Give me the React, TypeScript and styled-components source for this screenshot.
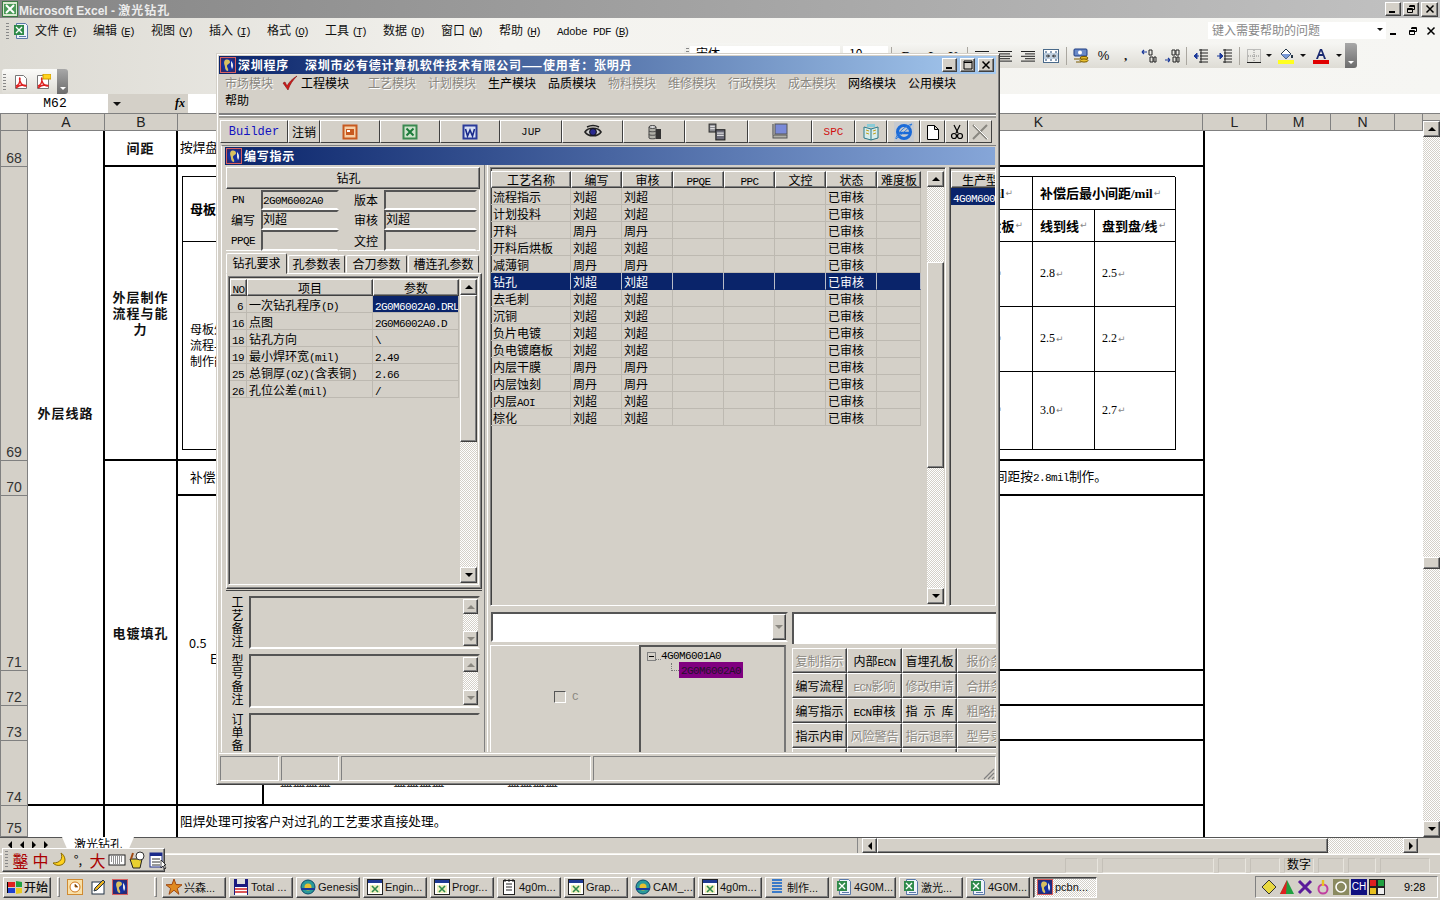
import React from 'react';
import styled, { createGlobalStyle, css } from 'styled-components';

const GRAY = '#d4d0c8';
const Global = createGlobalStyle`
  html, body { margin: 0; padding: 0; background: ${GRAY}; }
  body { font: 12px/14px "Noto Sans CJK SC", "Liberation Sans", sans-serif; color: #000; }
  * { box-sizing: border-box; }
`;

const raised = css`
  border: 1px solid; border-color: #fff #404040 #404040 #fff;
  box-shadow: inset -1px -1px 0 #808080;
  background: ${GRAY};
`;
const sunken = css`
  border: 1px solid; border-color: #808080 #fff #fff #808080;
  box-shadow: inset 1px 1px 0 #404040;
`;
const checker = css`
  background: repeating-conic-gradient(#fff 0 25%, ${GRAY} 0 50%) 0 0 / 2px 2px;
`;
const offText = css`color: #8a8780; text-shadow: 1px 1px 0 #fff;`;

const M = styled.span`font-family: "Liberation Mono", monospace; font-size: 11px; letter-spacing: -.6px; white-space: pre;`;
const Acc = styled(M)`letter-spacing: -2px;`;
const Mix = ({ t }: { t: string }) => (
  <>{t.split(/([\x20-\x7e]+)/).map((p, i) => (i % 2 ? <M key={i}>{p}</M> : p))}</>
);

const Page = styled.div`
  width: 1440px; height: 900px; position: relative; overflow: hidden;
  display: flex; flex-direction: column; background: ${GRAY};
`;

/* Icons */
const Ic = styled.svg<{ $s?: number }>`
  width: ${p => p.$s ?? 16}px; height: ${p => p.$s ?? 16}px; display: block; flex: none;
`;
type IP = { s?: number };
const XlBox = ({ s }: IP) => (
  <Ic $s={s} viewBox="0 0 16 16"><rect x=".5" y=".5" width="15" height="15" fill="#d8e8d0" stroke="#3c7a44" /><rect x="2" y="3" width="12" height="10" fill="#4a9a58" /><path d="M4 4l8 8M12 4l-8 8" stroke="#fff" strokeWidth="2" /></Ic>
);
const XlDoc = ({ s }: IP) => (
  <Ic $s={s} viewBox="0 0 16 16"><path d="M3.5.5h9l2 2v13h-11z" fill="#eef3fb" stroke="#5a78a8" /><rect x="1" y="2" width="10" height="10" fill="#2f8a4a" /><path d="M3 4l6 6M9 4l-6 6" stroke="#fff" strokeWidth="1.4" /><path d="M6 13.5h7" stroke="#5a78a8" /></Ic>
);
const XlTask = ({ s }: IP) => (
  <Ic $s={s} viewBox="0 0 16 16"><rect x=".5" y=".5" width="15" height="15" fill="#fff" stroke="#222" /><rect x="1" y="1" width="14" height="3" fill="#1f3a93" /><rect x="3" y="6" width="10" height="8" fill="#f0f0c0" /><path d="M5 7l6 6M11 7l-6 6" stroke="#2f8a4a" strokeWidth="1.6" /></Ic>
);
const Pdf = ({ note }: { note?: boolean }) => (
  <Ic viewBox="0 0 16 16"><path d="M2.5 1.5h8l3 3v10h-11z" fill="#fff" stroke="#777" /><path d="M3 12c3-1 4-4 4-7 0-2-1-1 0 2s3 5 6 5c1 0-1-1-3-1-2 0-5 1-7 3" fill="none" stroke="#d22" strokeWidth="1.4" />{note && <rect x="8" y="0" width="8" height="5" fill="#ffd21e" stroke="#c90" />}</Ic>
);
const Globe = ({ s }: IP) => (
  <Ic $s={s} viewBox="0 0 16 16"><rect x=".5" y=".5" width="15" height="15" fill="#2a2a70" stroke="#d86060" /><circle cx="8" cy="8" r="6.5" fill="#1430a0" /><path d="M5 3c3-1 5 0 5 2s-3 2-3 4 2 3 1 5c-2 0-3-2-3-4S3 6 5 3z" fill="#d8c060" /><path d="M11 4c2 2 3 5 1 8l-1-3z" fill="#e8e8e8" /></Ic>
);
const Win = () => (
  <Ic viewBox="0 0 16 16"><path d="M1 3h7v5H1z" fill="#e02020" /><path d="M9 2l6 1v5H9z" fill="#20a040" /><path d="M1 9h7v5H1z" fill="#2040d0" /><path d="M9 9h6v5l-6 1z" fill="#e8c820" /><path d="M0 3h1v11H0z" fill="#000" /></Ic>
);
const Lines = ({ a }: { a: 'c' | 'r' | 'l' }) => {
  const xs = [14, 10, 14, 10, 14];
  return (
    <Ic viewBox="0 0 16 16">
      {xs.map((w, i) => {
        const x = a === 'l' ? 1 : a === 'r' ? 15 - w : 8 - w / 2;
        return <rect key={i} x={x} y={3 + i * 2.4} width={w} height="1" fill="#222" />;
      })}
    </Ic>
  );
};
const Merge = () => (
  <Ic viewBox="0 0 16 16"><rect x=".5" y="1.5" width="15" height="13" fill="#fff" stroke="#4a6a8a" /><rect x="1" y="5" width="14" height="6" fill="#c0d0e0" /><path d="M3 8h3M13 8h-3M5 6.5L6.5 8 5 9.5M11 6.5L9.5 8l1.5 1.5" stroke="#222" fill="none" /><path d="M2 3h2v2H2zM7 3h2v2H7zM12 3h2v2h-2zM2 11h2v2H2zM7 11h2v2H7zM12 11h2v2h-2z" fill="#8aa0b8" /></Ic>
);
const Currency = () => (
  <Ic viewBox="0 0 16 16"><rect x="1" y="1" width="13" height="7" rx="1" fill="#6a8ac8" stroke="#1c3a80" /><circle cx="7" cy="4.5" r="2" fill="#fff" /><ellipse cx="11" cy="10" rx="4" ry="1.6" fill="#e8c030" stroke="#7a5a00" /><ellipse cx="11" cy="12.5" rx="4" ry="1.6" fill="#e8c030" stroke="#7a5a00" /><path d="M1 11h6M3 14h5" stroke="#7a5a00" /></Ic>
);
const Decimal = ({ dir }: { dir: 'inc' | 'dec' }) => (
  <Ic viewBox="0 0 16 16"><path d={dir === 'inc' ? 'M1 4h5M1 4l2-2M1 4l2 2' : 'M1 12h5M6 12l-2-2M6 12l-2 2'} stroke="#1c3a9a" fill="none" strokeWidth="1.2" /><path d="M8 2h3v5H8zM9 9h3v5H9zM13 9h2v5h-2z" fill="none" stroke="#222" />{dir === 'dec' && <path d="M12 2h3v5h-3z" fill="none" stroke="#222" />}</Ic>
);
const Indent = ({ out }: { out?: boolean }) => (
  <Ic viewBox="0 0 16 16"><path d="M6 2h9M7 5h8M7 8h8M7 11h8M6 14h9M8 1v14" stroke="#222" fill="none" /><path d={out ? 'M1 8h5M1 8l3-3v6z' : 'M0 8h4M6 8L3 5v6z'} fill="#1c3a9a" stroke="#1c3a9a" /></Ic>
);
const Borders = () => (
  <Ic viewBox="0 0 16 16"><path d="M1.5 1.5h13v13h-13zM8 2v12M2 8h12" fill="none" stroke="#888" strokeDasharray="1 1" /><path d="M1 14.5h14" stroke="#222" /></Ic>
);
const Fill = () => (
  <Ic viewBox="0 0 16 16"><path d="M8 1l5 5-5 5-5-5z" fill="#fff" stroke="#234" /><path d="M3 6h10l-5 5z" fill="#7a9ad8" /><path d="M14 7v3" stroke="#234" strokeWidth="2" /><rect y="12" width="16" height="4" fill="#ffff20" /></Ic>
);
const FontA = () => (
  <Ic viewBox="0 0 16 16"><path d="M3 11L7 1h2l4 10h-2l-1-3H6l-1 3zM6.7 6h2.6L8 3z" fill="#1a2a70" /><rect y="12" width="16" height="4" fill="#e00000" /></Ic>
);
const Grip = styled.span<{ $h?: number }>`
  width: 3px; height: ${p => p.$h ?? 16}px; flex: none; margin: 0 1px;
  background: repeating-linear-gradient(#888 0 1px, transparent 1px 3px);
`;
const Drop = styled.span`
  width: 0; height: 0; flex: none; border: 3px solid transparent; border-top: 3px solid #111; border-bottom: 0;
`;

/* Excel title */
const ExcelTitle = styled.div`
  height: 18px; flex: none; display: flex; align-items: center; padding: 0 2px;
  background: linear-gradient(90deg, #858585, #c2c2c2);
  color: #ececec; font: bold 12px "Liberation Sans", "Noto Sans CJK SC", sans-serif; gap: 1px;
`;
const TitleCjk = styled.span`letter-spacing: 1px;`;
const TitleSpacer = styled.div`flex: 1;`;
const CapBtn = styled.span<{ $s: number }>`
  ${raised}; width: ${p => p.$s}px; height: ${p => p.$s - 2}px; flex: none;
  display: flex; align-items: center; justify-content: center; color: #000;
  font: bold 10px/1 "Liberation Sans", sans-serif; margin-left: 1px;
`;
const CapIcon = ({ k, s = 10 }: { k: 'min' | 'max' | 'restore' | 'x'; s?: number }) => (
  <Ic $s={s} viewBox="0 0 10 10">
    {k === 'min' && <rect x="1" y="7" width="6" height="2" fill="#000" />}
    {k === 'max' && <path d="M1 1h8v8H1zM1 2.5h8" fill="none" stroke="#000" />}
    {k === 'restore' && <path d="M3.5 1.5h5v4h-2M1.5 4.5h5v4h-5zM3 2.5h5M1.5 5.5h5" fill="none" stroke="#000" />}
    {k === 'x' && <path d="M1.5 1.5l7 7M8.5 1.5l-7 7" stroke="#000" strokeWidth="1.5" />}
  </Ic>
);

/* Excel chrome */
const Chrome = styled.div`
  height: 76px; flex: none; display: flex; flex-direction: column;
  background: linear-gradient(90deg, #dcdad3, #f4f3ef 35%, #f6f6f3);
`;
const MenuRow = styled.div`
  height: 25px; flex: none; display: flex; align-items: center; padding-left: 5px;
`;
const MenuIcon = styled.div`width: 30px; flex: none; display: flex; align-items: center; gap: 3px;`;
const XMenu = styled.span`width: 58px; flex: none; white-space: nowrap; color: #111;`;
const XMenuU = styled.u`text-decoration: underline;`;
const AdobeAcc = styled(Acc)`margin-left: 3px;`;
const HelpBox = styled.div`
  margin-left: auto; width: 178px; height: 17px; background: #fff; color: #888; flex: none;
  display: flex; align-items: center; padding: 0 3px 2px 4px; justify-content: space-between;
`;
const HelpCtrl = styled.div`width: 54px; flex: none; display: flex; justify-content: space-between; align-items: center; padding: 0 4px 0 3px;`;
const FormatRow = styled.div`height: 26px; flex: none; display: flex;`;
const FormatBar = styled.div`
  margin-left: 684px; width: 673px; height: 25px; display: flex; align-items: center;
  background: linear-gradient(#f6f6f3, #dedcd5); border-radius: 3px;
`;
const Slot = styled.span<{ $w: number }>`
  width: ${p => p.$w}px; flex: none; display: flex; align-items: center; justify-content: center;
  font: bold 13px "Liberation Serif", serif; color: #111;
`;
const Pct = styled.span`font: 13px "Liberation Sans", sans-serif;`;
const SlotSep = styled.span`width: 6px; flex: none; height: 18px; display: flex; justify-content: center; &::after { content: ""; width: 1px; background: #aaa7a0; }`;
const FontBox = styled.span<{ $w: number }>`
  width: ${p => p.$w}px; height: 20px; flex: none; background: #fff; padding-left: 6px; line-height: 14px;
`;
const TbGrip = styled.span`
  width: 12px; height: 25px; margin-left: auto; flex: none; border-radius: 0 3px 3px 0;
  background: linear-gradient(#a8a8a8, #6c6c6c); display: flex; align-items: flex-end; justify-content: center; padding-bottom: 4px;
`;
const WhiteDrop = styled(Drop)`border-top-color: #fff;`;
const PdfRow = styled.div`height: 25px; flex: none; display: flex; padding-left: 2px;`;
const PdfBar = styled.div`
  width: 64px; display: flex; align-items: center; gap: 6px; border-radius: 3px 0 0 3px; position: relative;
  background: linear-gradient(#fbfbf9, #dedcd5);
`;
const PdfGrip = styled(TbGrip)`margin-left: auto; width: 11px;`;

/* Formula */
const FormulaRow = styled.div`height: 20px; flex: none; display: flex; background: #fff; border-bottom: 1px solid #808080;`;
const NameBox = styled.div`
  width: 106px; margin-left: 2px; background: #fff; text-align: center; font: 13px/20px "Liberation Mono", monospace;
`;
const NameCtrl = styled.div`
  width: 80px; background: ${GRAY}; display: flex; align-items: center; padding-left: 5px; justify-content: space-between; padding-right: 3px;
  font: italic bold 12px "Liberation Serif", serif;
`;
const NameDrop = styled.span`width: 0; height: 0; border: 4px solid transparent; border-top: 4px solid #111; border-bottom: 0;`;

/* Sheet */
const SheetArea = styled.div`height: 723px; flex: none; display: flex;`;
const SheetMain = styled.div`width: 1423px; flex: none; display: flex; flex-direction: column; border-left: 1px solid #808080;`;
const ColHead = styled.div`height: 17px; flex: none; display: flex; background: ${GRAY};`;
const ColCell = styled.div<{ $w: number }>`
  width: ${p => p.$w}px; flex: none; border-right: 1px solid #808080; border-bottom: 1px solid #808080;
  text-align: center; font: 14px/16px "Liberation Sans", sans-serif; color: #222;
`;
const SheetGrid = styled.div`
  flex: 1; display: grid; background: #fff;
  grid-template-columns: 27px 77px 73px 86px 941px 218px;
  grid-template-rows: 36px 294px 35px 175px 35px 35px 65px 31px;
`;
const RowNum = styled.div<{ $r: number }>`
  grid-column: 1; grid-row: ${p => p.$r}; background: ${GRAY};
  border-right: 1px solid #808080; border-bottom: 1px solid #808080;
  display: flex; align-items: flex-end; justify-content: center;
  font: 14px/16px "Liberation Sans", sans-serif; color: #333;
`;
const Cell = styled.div<{ $a: string; $bb?: number; $br?: number; $center?: boolean }>`
  grid-area: ${p => p.$a}; min-width: 0; overflow: hidden; font-size: 12.7px;
  border-bottom: ${p => p.$bb ?? 0}px solid #000; border-right: ${p => p.$br ?? 0}px solid #000;
  ${p => p.$center && css`display: flex; align-items: center; justify-content: center; text-align: center;`}
`;
const Strong = styled.b<{ $pb?: number }>`font-weight: 700; font-size: 13px; letter-spacing: 1px; line-height: 16px; padding: 0 6px ${p => p.$pb ?? 0}px; color: #111;`;
const PlainLine = styled.div`display: flex; height: 100%; align-items: center; padding: 0 0 2px 2px; white-space: nowrap;`;
const RightLine = styled(PlainLine)`padding-left: 12px; justify-content: space-between; padding-right: 96px;`;
const FillC1 = styled.div`padding: 139px 0 0 11px; line-height: 16px;`;
const ELine = styled.div`padding-left: 21px;`;
const PeekText = styled.div`padding: 32px 0 0 16px; white-space: nowrap; word-spacing: 60px;`;

const Nested = styled.div`
  margin: 9px 0 0 4px; width: 993px; display: grid;
  grid-template-columns: 748px 102px 62px 81px; grid-template-rows: 33px 32px 65px 65px 78px;
  border-top: 1px solid #000; border-left: 1px solid #000;
`;
const NCell = styled.div<{ $a: string; $al?: string; $pl?: number; $pr?: number }>`
  grid-area: ${p => p.$a}; border-right: 1px solid #000; border-bottom: 1px solid #000;
  display: flex; align-items: center; justify-content: ${p => p.$al ?? 'flex-start'};
  padding: 0 ${p => p.$pr ?? 0}px 1px ${p => p.$pl ?? 7}px;
  white-space: nowrap; font: 12px "Liberation Serif", "Noto Sans CJK SC", serif;
`;
const NBold = styled.b`font-weight: 700; font-size: 13px; font-family: "Liberation Serif", "Noto Sans CJK SC", serif;`;
const Ret = styled.span`color: #888; font: 9px "DejaVu Sans", sans-serif; margin-left: 1px;`;
const NLines = styled.div`line-height: 16px; white-space: pre; font-family: "Noto Sans CJK SC", sans-serif;`;

/* scrollbars */
const BarWrap = styled.div<{ $w: number }>`
  width: ${p => p.$w}px; flex: none; display: flex; flex-direction: column;
`;
const BarBtn = styled.div<{ $h: number }>`
  ${raised}; height: ${p => p.$h}px; flex: none; display: flex; align-items: center; justify-content: center;
`;
const Tri = styled.span<{ $dir: 'up' | 'down' | 'left' | 'right'; $off?: boolean }>`
  width: 0; height: 0; border: 4px solid transparent;
  ${p => {
    const c = p.$off ? '#8a8780' : '#000';
    if (p.$dir === 'up') return `border-bottom: 4px solid ${c}; border-top: 0;`;
    if (p.$dir === 'down') return `border-top: 4px solid ${c}; border-bottom: 0;`;
    if (p.$dir === 'left') return `border-right: 4px solid ${c}; border-left: 0;`;
    return `border-left: 4px solid ${c}; border-right: 0;`;
  }}
`;
const Track = styled.div<{ $h?: number }>`
  ${checker}; ${p => (p.$h !== undefined ? `flex: 0 0 ${p.$h}px;` : 'flex: 1;')}
`;
const Thumb = styled.div<{ $h: number }>`${raised}; flex: 0 0 ${p => p.$h}px;`;
const VBar = ({ w = 16, btn = 16, before, thumb, off }: { w?: number; btn?: number; before?: number; thumb?: number; off?: boolean }) => (
  <BarWrap $w={w}>
    <BarBtn $h={btn}><Tri $dir="up" $off={off} /></BarBtn>
    {thumb ? <><Track $h={before} /><Thumb $h={thumb} /><Track /></> : <Track />}
    <BarBtn $h={btn}><Tri $dir="down" $off={off} /></BarBtn>
  </BarWrap>
);
const MainV = styled.div`width: 17px; flex: none; display: flex; flex-direction: column; background: ${GRAY};`;
const Splitter = styled.div`height: 7px; flex: none; border-top: 2px solid ${GRAY}; border-bottom: 1px solid #808080;`;
const MainVFill = styled.div`flex: 1; display: flex; min-height: 0; & > * { width: 17px; }`;

/* Bottom Excel */
const TabRow = styled.div`height: 16px; flex: none; display: flex; align-items: flex-start; background: ${GRAY}; border-top: 1px solid #555; border-bottom: 1px solid #fff; box-sizing: content-box; margin-bottom: -2px;`;
const TabNav = styled.div`width: 56px; flex: none; display: flex; justify-content: space-around; padding: 3px 4px 0;`;
const SheetTab = styled.div`
  width: 72px; height: 14px; flex: none; background: #fff; overflow: hidden; text-align: center; line-height: 14px; margin-left: 6px;
  clip-path: polygon(0 0, 100% 0, calc(100% - 6px) 100%, 6px 100%); margin-top: -1px;
`;
const TabGap = styled.div`flex: 1;`;
const HBar = styled.div`width: 561px; height: 15px; flex: none; display: flex; border-left: 1px solid #888; padding-left: 4px;`;
const HBtn = styled.div`${raised}; width: 15px; flex: none; display: flex; align-items: center; justify-content: center;`;
const HThumb = styled.div`${raised}; width: 451px; flex: none;`;
const HTrack = styled.div`${checker}; flex: 1;`;
const TabEnd = styled.div`width: 22px; flex: none;`;
const StatusRow = styled.div`height: 20px; flex: none; display: flex; align-items: center; justify-content: flex-end; gap: 4px; padding-right: 10px; padding-top: 3px; border-top: 1px solid #f4f2ec;`;
const StatusPanel = styled.div<{ $w: number }>`
  width: ${p => p.$w}px; height: 15px; flex: none; border: 1px solid; border-color: #c4c0b8 #e8e5de #e8e5de #c4c0b8; text-align: center; line-height: 10px;
`;

const Ime = styled.div`
  position: absolute; left: 2px; top: 848px; width: 163px; height: 24px; ${raised};
  display: flex; align-items: center; gap: 2px; padding-left: 1px; color: #a00; font-size: 16px; z-index: 2;
`;
const ImeGlyph = styled.span<{ $w: number }>`width: ${p => p.$w}px; flex: none; display: flex; justify-content: center; align-items: center;`;
const ImeDark = styled(ImeGlyph)`color: #111; font-size: 13px;`;

const Taskbar = styled.div`height: 27px; flex: none; display: flex; align-items: center; border-top: 1px solid #fff; padding-left: 3px; background: ${GRAY};`;
const StartBtn = styled.div`
  ${raised}; width: 48px; height: 21px; flex: none; display: flex; align-items: center; padding-left: 3px; gap: 1px; font-weight: 500; color: #111;
`;
const TbHandle = styled.span<{ $ml: number; $mr: number }>`
  width: 3px; height: 20px; flex: none; margin: 0 ${p => p.$mr}px 0 ${p => p.$ml}px; border: 1px solid; border-color: #fff #808080 #808080 #fff;
`;
const Quick = styled.div`width: 69px; flex: none; display: flex; justify-content: space-between; padding: 0 4px;`;
const TaskBtn = styled.div<{ $on?: boolean }>`
  ${raised}; width: 64px; height: 21px; flex: none; margin-right: 3px; padding-left: 3px; display: flex; align-items: center; gap: 2px;
  white-space: nowrap; overflow: hidden; font: 11px "Liberation Sans", "Noto Sans CJK SC", sans-serif; color: #111;
  ${p => p.$on && css`
    border-color: #404040 #fff #fff #404040; box-shadow: inset 1px 1px 0 #808080;
    background: repeating-conic-gradient(#fff 0 25%, ${GRAY} 0 50%) 0 0 / 2px 2px;
  `}
`;
const Tray = styled.div`
  margin-left: auto; margin-right: 2px; width: 183px; height: 22px; flex: none; display: flex; align-items: center;
  border: 1px solid; border-color: #808080 #fff #fff #808080; padding-left: 4px;
`;
const TrayItem = styled.span`width: 18px; flex: none; display: flex; justify-content: center;`;
const Clock = styled.span`margin-left: 18px; font: 11px "Liberation Sans", sans-serif;`;
const Ch = styled.span`background: #101080; color: #fff; font: 10px/16px "Liberation Sans", sans-serif; width: 16px; height: 16px; text-align: center;`;

/* Dialog */
const Dialog = styled.div`
  position: absolute; left: 216px; top: 53px; width: 784px; height: 732px; z-index: 1;
  background: ${GRAY}; display: flex; flex-direction: column; padding: 2px 3px 1px 2px;
  border: 1px solid; border-color: ${GRAY} #404040 #404040 ${GRAY};
  box-shadow: inset 1px 1px 0 #fff, inset -1px -1px 0 #808080;
`;
const WinTitle = styled.div`
  height: 18px; flex: none; display: flex; align-items: center; padding: 0 2px 0 1px; color: #fff; font-weight: 700; white-space: nowrap;
  background: linear-gradient(90deg, #0a246a, #a6caf0); gap: 2px; letter-spacing: .75px;
`;
const TitleGap = styled.span`width: 12px;`;
const DlgCap = styled(CapBtn)`height: 14px;`;
const DMenuRow = styled.div`height: 18px; flex: none; display: flex; align-items: center; padding-left: 6px; white-space: nowrap;`;
const DMenu = styled.span<{ $w: number; $off?: boolean }>`
  width: ${p => p.$w}px; flex: none; display: flex; align-items: center; gap: 2px;
  ${p => p.$off && offText}
`;
const HelpMenuRow = styled(DMenuRow)`padding-bottom: 2px;`;
const Rule = styled.div`height: 5px; flex: none; margin-top: 3px; border-top: 2px solid #808080; border-bottom: 2px solid #9c9a94; box-shadow: inset 0 0 0 1px #fff;`;
const DToolbar = styled.div`height: 23px; flex: none; margin: 2px 0 0 1px; display: flex;`;
const DTool = styled.div<{ $w: number }>`
  width: ${p => p.$w}px; flex: none; border: 1px solid; border-color: #fff #404040 #404040 #fff;
  display: flex; align-items: center; justify-content: center; white-space: nowrap; overflow: hidden;
`;
const ToolMono = styled.span<{ $c?: string; $s?: number }>`font: ${p => p.$s ?? 11}px "Liberation Mono", monospace; color: ${p => p.$c ?? '#111'};`;
const Child = styled.div`
  flex: 1; min-height: 0; margin: 2px 0 0 2px; border-left: 1px solid #fff; border-top: 1px solid #808080; padding: 1px 0 0 3px; display: flex; flex-direction: column; overflow: hidden;
`;
const ChildTitle = styled(WinTitle)`margin-right: 1px; background: linear-gradient(90deg, #0a246a, #86a6d8);`;
const ChildBody = styled.div`flex: 1; min-height: 0; display: flex; overflow: hidden;`;
const LeftPane = styled.div`width: 257px; flex: none; padding: 2px 0 0 1px; display: flex; flex-direction: column; overflow: hidden;`;
const Head = styled.div`${raised}; height: 22px; flex: none; width: 254px; text-align: center; line-height: 20px; padding-right: 9px;`;
const FormGrid = styled.div`
  margin-top: 1px; flex: none; display: grid; grid-template-columns: 35px 78px 45px 93px; grid-template-rows: 20px 20px 21px; width: 254px; height: 61px;
  border: solid #fff; border-width: 0 1px 1px 0;
`;
const FLabel = styled.div<{ $pl: number }>`display: flex; align-items: center; padding-left: ${p => p.$pl}px; font-size: 12px;`;
const FInput = styled.div`
  border: 2px solid; border-color: #555 #d4d0c8 #fff #555; line-height: 14px; white-space: nowrap; overflow: hidden;
`;
const Tabs = styled.div`height: 21px; flex: none; margin-top: 1px; display: flex; align-items: flex-end; gap: 1px;`;
const PTab = styled.div<{ $w: number; $on?: boolean }>`
  width: ${p => p.$w}px; height: ${p => (p.$on ? 21 : 18)}px; flex: none; text-align: center; line-height: 16px;
  border: 1px solid; border-color: #fff #404040 transparent #fff; border-radius: 2px 2px 0 0;
  white-space: nowrap;
  ${p => p.$on && 'border-bottom-color: #d4d0c8; margin-bottom: -1px; position: relative; z-index: 1; line-height: 17px;'}
`;
const TabPanel = styled.div`
  height: 316px; flex: none; width: 256px; padding: 2px 2px 3px 1px; display: flex;
  border: 1px solid; border-color: #fff #404040 #404040 #fff; box-shadow: inset -1px -1px 0 #808080;
`;
const PanelFrame = styled.div`flex: 1; display: flex; ${sunken}; padding: 2px 1px 1px 1px; gap: 1px;`;
const GridArea = styled.div`flex: 1; min-width: 0;`;
const LGrid = styled.div`
  display: grid; grid-template-columns: 17px 126px 86px; grid-auto-rows: 17px; width: 229px;
`;
const GHead = styled.div`
  ${raised}; text-align: center; line-height: 15px; white-space: nowrap; overflow: hidden;
`;
const GCell = styled.div<{ $sel?: boolean; $r?: boolean; $navyRow?: boolean }>`
  border-right: 1px solid #bdb9b1; border-bottom: 1px solid #bdb9b1; padding: 0 2px; white-space: nowrap; overflow: hidden; line-height: 17px;
  ${p => p.$r && 'text-align: right; padding-right: 3px;'}
  ${p => p.$sel && css`background: #0a246a; color: #fff;`}
  ${p => p.$navyRow && css`border-bottom-color: #0a246a; border-right-color: #b8bcc8;`}
`;
const Remarks = styled.div`flex: 1; min-height: 0; margin-top: 1px; border-top: 1px solid #444; padding: 5px 0 0 4px; overflow: hidden; display: flex; flex-direction: column; gap: 5px;`;
const RemarkRow = styled.div<{ $h: number }>`height: ${p => p.$h}px; flex: none; display: flex; gap: 5px;`;
const VLabel = styled.div`width: 14px; flex: none; writing-mode: vertical-rl; text-orientation: upright; line-height: 14px; letter-spacing: 1px;`;
const RemarkBox = styled.div`
  width: 231px; flex: none; display: flex; justify-content: flex-end;
  border: 2px solid; border-color: #555 #d4d0c8 #fff #555; padding: 1px 0;
`;
const Split = styled.div`width: 4px; flex: none; border-left: 1px solid #808080; border-right: 1px solid #fff; margin-left: 2px;`;
const RightPane = styled.div`width: 509px; flex: none; padding-top: 2px; display: flex; flex-direction: column; overflow: hidden;`;
const TopRow = styled.div`height: 439px; flex: none; display: flex; gap: 3px; padding-left: 2px;`;
const GridFrame = styled.div`width: 456px; flex: none; ${sunken}; display: flex; padding: 3px 2px 1px 0; gap: 6px;`;
const RGrid = styled.div`
  width: 430px; flex: none; display: grid; grid-template-columns: 80px repeat(6, 51px) 44px; grid-auto-rows: 17px; align-content: start;
`;
const ListFrame = styled.div`width: 47px; flex: none; ${sunken}; padding: 3px 0 0 1px; display: flex; flex-direction: column; overflow: hidden;`;
const ListHead = styled(GHead)`height: 17px; flex: none; width: 70px;`;
const ListSel = styled.div`height: 17px; flex: none; background: #0a246a; color: #fff; white-space: nowrap; overflow: hidden; padding-left: 2px; line-height: 17px;`;
const ComboRow = styled.div`height: 32px; flex: none; margin-top: 6px; display: flex; padding-left: 3px; gap: 4px;`;
const Combo = styled.div`
  width: 297px; height: 30px; flex: none; background: #fff; border: 2px solid; border-color: #555 #d4d0c8 #fff #555; display: flex; justify-content: flex-end;
`;
const ComboBtn = styled.div`${raised}; width: 14px; flex: none; display: flex; align-items: center; justify-content: center;`;
const WhiteBox = styled.div`flex: 1; background: #fff; border: solid #555; border-width: 2px 0 0 2px;`;
const BottomRow = styled.div`flex: 1; min-height: 0; display: flex; overflow: hidden; margin-top: 1px;`;
const CheckPanel = styled.div`
  width: 149px; flex: none; margin-left: 2px; border-top: 1px solid #fff; border-left: 1px solid #fff; display: flex; align-items: center; justify-content: center; gap: 6px; padding: 0 0 4px 2px; color: #8a8780;
`;
const CheckBox = styled.span`width: 12px; height: 12px; border: 1px solid; border-color: #555 #fff #fff #555; flex: none;`;
const TreeBox = styled.div`
  width: 147px; flex: none; border: solid; border-width: 2px 0 0 2px; border-color: #555; padding: 2px 0 0 6px; border-right: 2px solid #777;
`;
const TreeRow = styled.div<{ $pl?: number }>`display: flex; align-items: center; height: 14px; padding-left: ${p => p.$pl ?? 0}px;`;
const TreeMinus = styled.span`width: 9px; height: 9px; flex: none; border: 1px solid #808080; display: flex; align-items: center; justify-content: center; &::after { content: ""; width: 5px; height: 1px; background: #000; }`;
const TreeDots = styled.span<{ $w: number }>`width: ${p => p.$w}px; flex: none; border-bottom: 1px dotted #777; height: 7px;`;
const TreeElbow = styled(TreeDots)`border-left: 1px dotted #777; height: 8px; margin-bottom: 6px;`;
const TreeSel = styled.span`background: #800080; color: #25102a; padding: 0 2px; line-height: 13px;`;
const BtnGrid = styled.div`
  flex: 1; margin-left: 6px; padding-top: 3px; display: grid; grid-template-columns: repeat(4, 55px); grid-auto-rows: 25px; overflow: hidden; min-width: 0;
`;
const CmdBtn = styled.div<{ $off?: boolean }>`
  ${raised}; text-align: center; line-height: 23px; white-space: nowrap; overflow: hidden;
  ${p => p.$off && offText}
`;
const DStatus = styled.div`height: 30px; flex: none; margin-top: 1px; display: flex; border-top: 1px solid #fff; padding: 2px 0 2px 1px; gap: 2px;`;
const DPanel = styled.div<{ $w?: number }>`
  ${p => (p.$w ? `width: ${p.$w}px; flex: none;` : 'flex: 1;')}
  border: 1px solid; border-color: #808080 #fff #fff #808080; display: flex; align-items: flex-end; justify-content: flex-end;
`;

const slots: [number, React.ReactNode][] = [
  [23, <Lines a="c" />], [23, <Lines a="r" />], [24, <Merge />],
];

const PROCESS = [
  ['流程指示', '刘超', '刘超'], ['计划投料', '刘超', '刘超'], ['开料', '周丹', '周丹'], ['开料后烘板', '刘超', '刘超'],
  ['减薄铜', '周丹', '周丹'], ['钻孔', '刘超', '刘超'], ['去毛刺', '刘超', '刘超'], ['沉铜', '刘超', '刘超'],
  ['负片电镀', '刘超', '刘超'], ['负电镀磨板', '刘超', '刘超'], ['内层干膜', '周丹', '周丹'], ['内层蚀刻', '周丹', '周丹'],
  ['内层AOI', '刘超', '刘超'], ['棕化', '刘超', '刘超'],
];
const PARAMS = [
  ['6', '一次钻孔程序(D)', '2G0M6002A0.DRL'], ['16', '点图', '2G0M6002A0.D'], ['18', '钻孔方向', '\\'],
  ['19', '最小焊环宽(mil)', '2.49'], ['25', '总铜厚(OZ)(含表铜)', '2.66'], ['26', '孔位公差(mil)', '/'],
];
const COMMANDS: [string, boolean][] = [
  ['复制指示', true], ['内部ECN', false], ['盲埋孔板', false], ['报价条', true],
  ['编写流程', false], ['ECN影响', true], ['修改申请', true], ['合拼条', true],
  ['编写指示', false], ['ECN审核', false], ['指 示 库', false], ['粗略拼', true],
  ['指示内审', false], ['风险警告', true], ['指示退率', true], ['型号录', true],
  ['', false], ['', false], ['', false], ['', false],
];
const XMENUS: [string, string][] = [['文件', 'F'], ['编辑', 'E'], ['视图', 'V'], ['插入', 'I'], ['格式', 'O'], ['工具', 'T'], ['数据', 'D'], ['窗口', 'W'], ['帮助', 'H']];

const Check = () => (
  <Ic $s={18} viewBox="0 0 18 18"><path d="M2 9l5 7c2-6 5-10 9-14-5 3-8 6-10 10L4 8z" fill="#d01818" stroke="#801010" strokeWidth=".6" /></Ic>
);
const IPpt = () => <Ic viewBox="0 0 16 16"><rect x="1.5" y="1.5" width="13" height="13" fill="#f6d0a8" stroke="#c85a20" strokeWidth="2" /><rect x="4" y="5" width="8" height="6" fill="#c85a20" /><rect x="5" y="6" width="3" height="2" fill="#fff" /></Ic>;
const IXl = () => <Ic viewBox="0 0 16 16"><rect x="1.5" y="1.5" width="13" height="13" fill="#cfe3cc" stroke="#3a8a50" strokeWidth="2" /><path d="M4.5 4.5l7 7M11.5 4.5l-7 7" stroke="#1a7a3a" strokeWidth="2" /></Ic>;
const IWd = () => <Ic viewBox="0 0 16 16"><rect x="1.5" y="1.5" width="13" height="13" fill="#d8e0f4" stroke="#2a3a9a" strokeWidth="2" /><path d="M3.5 5l2 7 2.5-6 2.5 6 2-7" fill="none" stroke="#1a2a8a" strokeWidth="1.6" /></Ic>;
const IEye = () => <Ic $s={18} viewBox="0 0 18 18"><path d="M1 9c3-5 13-5 16 0-3 5-13 5-16 0z" fill="#d0d0d0" stroke="#222" strokeWidth="1.6" /><circle cx="9" cy="9" r="3.4" fill="#2a2a90" stroke="#111" /><path d="M3 4c4-2 8-2 12 0" stroke="#222" strokeWidth="1.6" fill="none" /></Ic>;
const IDb = () => <Ic viewBox="0 0 16 16"><path d="M3 3v11c0 1 7 1 7 0V3z" fill="#b0b0a8" stroke="#444" /><ellipse cx="6.5" cy="3" rx="3.5" ry="1.5" fill="#ddd" stroke="#444" /><path d="M3 7c0 1 7 1 7 0M3 10.5c0 1 7 1 7 0" fill="none" stroke="#444" /><rect x="10" y="5" width="5" height="10" fill="#333" /></Ic>;
const IServers = () => <Ic $s={18} viewBox="0 0 16 16"><rect x="1" y="1" width="6" height="7" fill="#8a8a90" stroke="#333" /><rect x="7" y="6" width="8" height="9" fill="#6a6a78" stroke="#222" /><path d="M8 9h6M8 11h6M2 3h4M2 5h4" stroke="#ddd" /></Ic>;
const IPc = () => <Ic $s={18} viewBox="0 0 18 18"><rect x="4" y="1" width="12" height="10" fill="#7a8ad8" stroke="#555" /><rect x="2" y="12" width="14" height="3" fill="#b0b0a8" stroke="#555" /><path d="M2 1v11" stroke="#888" strokeWidth="2" /></Ic>;
const INotes = () => <Ic $s={18} viewBox="0 0 18 18"><path d="M2 4l7 2 7-2v11l-7 2-7-2z" fill="#d8ecea" stroke="#2a7a8a" /><path d="M9 6v11" stroke="#2a7a8a" /><path d="M4 7l3 1M4 10l3 1M11 8l3-1M11 11l3-1" stroke="#c0a020" /><rect x="5" y="1" width="8" height="3" fill="#88ccd8" /></Ic>;
const IIe = () => <Ic $s={20} viewBox="0 0 20 20"><rect x="0" y="0" width="20" height="20" fill="#b8c4d8" opacity=".5" /><circle cx="10" cy="10" r="6.5" fill="none" stroke="#1a6ad8" strokeWidth="3" /><path d="M3 11h14" stroke="#1a6ad8" strokeWidth="2.5" /><path d="M2 17C1 14 10 4 18 2c-3 4-8 8-16 15z" fill="none" stroke="#2a7ae0" /></Ic>;
const IDoc = () => <Ic viewBox="0 0 16 16"><path d="M2.5 1.5h7l4 4v10h-11zM9.5 1.5v4h4" fill="#fff" stroke="#000" /></Ic>;
const IScissors = () => <Ic viewBox="0 0 16 16"><path d="M5 1l4 8M11 1L7 9" stroke="#000" strokeWidth="1.2" /><circle cx="5" cy="12" r="2.5" fill="none" stroke="#000" strokeWidth="1.2" /><circle cx="11" cy="12" r="2.5" fill="none" stroke="#000" strokeWidth="1.2" /></Ic>;
const ICross = () => <Ic $s={18} viewBox="0 0 18 18"><path d="M2 2l14 14M16 2L2 16" stroke="#8a8780" strokeWidth="2" /><path d="M3 2l14 14" stroke="#fff" /></Ic>;
const IStar = () => <Ic viewBox="0 0 16 16"><path d="M8 0l2 5.5 6 .3-4.7 3.7 1.6 5.8L8 11.2 3 15.3l1.6-5.8L0 5.8l6-.3z" fill="#e08a20" stroke="#a04810" /></Ic>;
const IFloppy = () => <Ic viewBox="0 0 16 16"><rect x="1" y="0" width="14" height="16" fill="#1a1a80" /><rect x="4" y="0" width="8" height="5" fill="#ddd" /><rect x="2" y="8" width="12" height="8" fill="#fff" /><path d="M2 10h12M2 13h12" stroke="#d02020" strokeWidth="1.5" /></Ic>;
const IGen = () => <Ic viewBox="0 0 16 16"><circle cx="8" cy="8" r="7" fill="#2a9a9a" stroke="#0a4a6a" /><circle cx="8" cy="8" r="3.5" fill="#e8c030" /><path d="M1 10h14" stroke="#1a3a9a" strokeWidth="2" /></Ic>;
const INote = () => <Ic viewBox="0 0 16 16"><rect x="2.5" y="1.5" width="11" height="14" fill="#fff" stroke="#222" /><path d="M5 5h6M5 8h6M5 11h6M4 0v3M8 0v3M12 0v3" stroke="#222" /></Ic>;
const IWp = () => <Ic viewBox="0 0 16 16"><path d="M3 1h10M3 4h10M3 7h10M3 10h10M3 13h10" stroke="#3a7ac8" strokeWidth="2" /></Ic>;
const IClock = () => <Ic viewBox="0 0 16 16"><rect x=".5" y=".5" width="15" height="15" fill="#f8e0a8" stroke="#d08a30" /><circle cx="8" cy="8" r="5" fill="#fff" stroke="#d0781c" /><path d="M8 5v3h3" stroke="#d0781c" /></Ic>;
const IPad = () => <Ic viewBox="0 0 16 16"><rect x="2" y="3" width="12" height="12" fill="#fff" stroke="#234" /><path d="M5 9l8-8 2 2-8 8-3 1z" fill="#e8b020" stroke="#234" /></Ic>;
const IMoon = () => <Ic viewBox="0 0 16 16"><path d="M10 1c2 5 0 10-8 10 3 4 12 3 12-3 0-3-2-6-4-7z" fill="#ffd21e" stroke="#8a6a00" /></Ic>;
const IKey = () => <Ic $s={18} viewBox="0 0 18 18"><rect x="1" y="4" width="16" height="10" fill="#fff" stroke="#222" /><path d="M3 6h12M3 8h12M3 10h12M5 12h8" stroke="#222" strokeDasharray="1 1" /></Ic>;
const IPerson = () => <Ic $s={18} viewBox="0 0 18 18"><path d="M2 8h12l-2 9H5z" fill="#e8d030" stroke="#222" /><circle cx="12" cy="5" r="4" fill="#fff" stroke="#333" /><path d="M5 2l-2 6" stroke="#a04810" strokeWidth="2" /></Ic>;
const IImeDoc = () => <Ic $s={18} viewBox="0 0 18 18"><rect x="1" y="2" width="12" height="14" fill="#fff" stroke="#1a2a8a" /><rect x="1" y="2" width="12" height="3" fill="#1a2a8a" /><path d="M3 8h8M3 11h8M3 14h8" stroke="#333" /><path d="M12 9v8l2-2 2 3 1-1-2-3h2z" fill="#fff" stroke="#000" strokeWidth=".7" /></Ic>;
const TrayIcons = [
  <Ic viewBox="0 0 16 16"><path d="M8 1l7 7-7 7-7-7z" fill="#e8d840" stroke="#333" /></Ic>,
  <Ic viewBox="0 0 16 16"><path d="M8 1l7 14H1z" fill="#20a040" /><path d="M8 1l-7 14h6z" fill="#e02020" /></Ic>,
  <Ic viewBox="0 0 16 16"><path d="M2 2l12 12M14 2L2 14" stroke="#5a1a9a" strokeWidth="3" /></Ic>,
  <Ic viewBox="0 0 16 16"><circle cx="8" cy="10" r="4.5" fill="none" stroke="#c040a0" strokeWidth="2" /><path d="M8 1v6" stroke="#e8c020" strokeWidth="2.4" /></Ic>,
  <Ic viewBox="0 0 16 16"><rect width="16" height="16" fill="#8a8a60" /><circle cx="8" cy="8" r="5" fill="none" stroke="#fff" strokeWidth="1.6" /></Ic>,
  <Ch>CH</Ch>,
  <Ic viewBox="0 0 16 16"><rect width="16" height="16" fill="#222" /><rect x="1" y="1" width="6" height="6" fill="#e02020" /><rect x="9" y="1" width="6" height="6" fill="#20a040" /><rect x="1" y="9" width="6" height="6" fill="#e8c020" /><rect x="9" y="9" width="6" height="6" fill="#eee" /></Ic>,
];
const TASKS: [React.ReactNode, string, boolean?][] = [
  [<IStar />, '兴森...'], [<IFloppy />, 'Total ...'], [<IGen />, 'Genesis'], [<XlTask />, 'Engin...'], [<XlTask />, 'Progr...'], [<INote />, '4g0m...'],
  [<XlTask />, 'Grap...'], [<IGen />, 'CAM_...'], [<XlTask />, '4g0m...'], [<IWp />, '制作...'], [<XlDoc />, '4G0M...'], [<XlDoc />, '激光...'], [<XlDoc />, '4G0M...'], [<Globe />, 'pcbn...', true],
];
const TOOLS: [number, React.ReactNode][] = [
  [68, <ToolMono $c="#1212c0" $s={12}>Builder</ToolMono>], [32, '注销'], [60, <IPpt />], [60, <IXl />], [60, <IWd />],
  [62, <ToolMono>JUP</ToolMono>], [61, <IEye />], [62, <IDb />], [63, <IServers />], [64, <IPc />],
  [43, <ToolMono $c="#d01010">SPC</ToolMono>], [32, <INotes />], [33, <IIe />], [25, <IDoc />], [23, <IScissors />], [24, <ICross />],
];

export default function App() {
  return (
    <Page>
      <Global />
      <ExcelTitle>
        <XlBox />
        <span>Microsoft Excel - <TitleCjk>激光钻孔</TitleCjk></span>
        <TitleSpacer />
        <CapBtn $s={16}><CapIcon k="min" /></CapBtn>
        <CapBtn $s={16}><CapIcon k="restore" /></CapBtn>
        <CapBtn $s={17}><CapIcon k="x" /></CapBtn>
      </ExcelTitle>

      <Chrome>
        <MenuRow>
          <MenuIcon><Grip /><XlDoc /></MenuIcon>
          {XMENUS.map(([t, k]) => (
            <XMenu key={t}>{t} <Acc>(<XMenuU>{k}</XMenuU>)</Acc></XMenu>
          ))}
          <XMenu><M>Adobe PDF</M><AdobeAcc>(<XMenuU>B</XMenuU>)</AdobeAcc></XMenu>
          <HelpBox>键入需要帮助的问题<Drop /></HelpBox>
          <HelpCtrl>
            <CapIcon k="min" /><CapIcon k="restore" /><CapIcon k="x" />
          </HelpCtrl>
        </MenuRow>
        <FormatRow>
          <FormatBar>
            <Slot $w={6}><Grip /></Slot>
            <FontBox $w={150}>宋体</FontBox>
            <Slot $w={3} />
            <FontBox $w={45}>10</FontBox>
            <SlotSep />
            <Slot $w={24}>B</Slot><Slot $w={24}><i>I</i></Slot><Slot $w={22}><u>U</u></Slot>
            <SlotSep />
            <Slot $w={23}><Lines a="l" /></Slot>
            {slots.map(([w, n], i) => <Slot key={i} $w={w}>{n}</Slot>)}
            <SlotSep />
            <Slot $w={24}><Currency /></Slot>
            <Slot $w={21}><Pct>%</Pct></Slot>
            <Slot $w={23}>,</Slot>
            <Slot $w={23}><Decimal dir="inc" /></Slot>
            <Slot $w={23}><Decimal dir="dec" /></Slot>
            <SlotSep />
            <Slot $w={24}><Indent out /></Slot>
            <Slot $w={23}><Indent /></Slot>
            <SlotSep />
            <Slot $w={23}><Borders /></Slot>
            <Slot $w={8}><Drop /></Slot>
            <Slot $w={26}><Fill /></Slot>
            <Slot $w={8}><Drop /></Slot>
            <Slot $w={28}><FontA /></Slot>
            <Slot $w={8}><Drop /></Slot>
            <TbGrip><WhiteDrop /></TbGrip>
          </FormatBar>
        </FormatRow>
        <PdfRow>
          <PdfBar>
            <Grip />
            <Pdf />
            <Pdf note />
            <PdfGrip><WhiteDrop /></PdfGrip>
          </PdfBar>
        </PdfRow>
      </Chrome>

      <FormulaRow>
        <NameBox>M62</NameBox>
        <NameCtrl><NameDrop /><span>fx</span></NameCtrl>
      </FormulaRow>

      <SheetArea>
        <SheetMain>
          <ColHead>
            <ColCell $w={27} />
            <ColCell $w={77}>A</ColCell>
            <ColCell $w={73}>B</ColCell>
            <ColCell $w={697} />
            <ColCell $w={328}>K</ColCell>
            <ColCell $w={64}>L</ColCell>
            <ColCell $w={64}>M</ColCell>
            <ColCell $w={64}>N</ColCell>
            <ColCell $w={28} />
          </ColHead>
          <SheetGrid>
            {['68', '69', '70', '71', '72', '73', '74', '75'].map((n, i) => <RowNum key={n} $r={i + 1}>{n}</RowNum>)}
            <Cell $a="1 / 2 / 8 / 3" $br={2} $bb={2} $center><Strong $pb={110}>外层线路</Strong></Cell>
            <Cell $a="1 / 3 / 2 / 4" $br={2} $bb={2} $center><Strong>间距</Strong></Cell>
            <Cell $a="2 / 3 / 3 / 4" $br={2} $bb={2} $center><Strong>外层制作流程与能力</Strong></Cell>
            <Cell $a="3 / 3 / 8 / 4" $br={2} $bb={2} $center><Strong>电镀填孔</Strong></Cell>
            <Cell $a="8 / 2 / 9 / 3" $br={2} />
            <Cell $a="8 / 3 / 9 / 4" $br={2} />
            <Cell $a="1 / 4 / 2 / 6" $br={2} $bb={2}><PlainLine>按焊盘补偿后的间距</PlainLine></Cell>
            <Cell $a="2 / 4 / 3 / 6" $br={2} $bb={2}>
              <Nested>
                <NCell $a="1 / 1 / 3 / 2"><NBold>母板外层线路</NBold></NCell>
                <NCell $a="1 / 2 / 2 / 3" $al="flex-end" $pl={0} $pr={19}><NBold>线宽/mil</NBold><Ret>↵</Ret></NCell>
                <NCell $a="1 / 3 / 2 / 5"><NBold>补偿后最小间距/mil</NBold><Ret>↵</Ret></NCell>
                <NCell $a="2 / 2 / 3 / 3" $al="flex-end" $pl={0} $pr={9}><NBold>线到金板</NBold><Ret>↵</Ret></NCell>
                <NCell $a="2 / 3 / 3 / 4"><NBold>线到线</NBold><Ret>↵</Ret></NCell>
                <NCell $a="2 / 4 / 3 / 5"><NBold>盘到盘/线</NBold><Ret>↵</Ret></NCell>
                <NCell $a="3 / 1 / 6 / 2"><NLines>{'母板外层线路\n流程与能力\n制作能力'}</NLines></NCell>
                <NCell $a="3 / 2 / 4 / 3" $al="flex-end" $pl={0} $pr={30}>3.0<Ret>↵</Ret></NCell><NCell $a="3 / 3 / 4 / 4">2.8<Ret>↵</Ret></NCell><NCell $a="3 / 4 / 4 / 5">2.5<Ret>↵</Ret></NCell>
                <NCell $a="4 / 2 / 5 / 3" $al="flex-end" $pl={0} $pr={30}>2.5<Ret>↵</Ret></NCell><NCell $a="4 / 3 / 5 / 4">2.5<Ret>↵</Ret></NCell><NCell $a="4 / 4 / 5 / 5">2.2<Ret>↵</Ret></NCell>
                <NCell $a="5 / 2 / 6 / 3" $al="flex-end" $pl={0} $pr={30}>3.0<Ret>↵</Ret></NCell><NCell $a="5 / 3 / 6 / 4">3.0<Ret>↵</Ret></NCell><NCell $a="5 / 4 / 6 / 5">2.7<Ret>↵</Ret></NCell>
              </Nested>
            </Cell>
            <Cell $a="3 / 4 / 4 / 6" $br={2} $bb={2}>
              <RightLine><span>补偿</span><span><Mix t="间距按2.8mil制作。" /></span></RightLine>
            </Cell>
            <Cell $a="4 / 4 / 8 / 5" $br={2} $bb={2}>
              <FillC1>0.5<ELine>E</ELine></FillC1>
            </Cell>
            <Cell $a="4 / 5 / 5 / 6" $br={2} $bb={2} />
            <Cell $a="5 / 5 / 6 / 6" $br={2} $bb={2} />
            <Cell $a="6 / 5 / 7 / 6" $br={2} $bb={2} />
            <Cell $a="7 / 5 / 8 / 6" $br={2} $bb={2}><PeekText>盘盘盘盘 盘盘盘盘 盘盘盘盘</PeekText></Cell>
            <Cell $a="8 / 4 / 9 / 6" $br={2}><PlainLine>阻焊处理可按客户对过孔的工艺要求直接处理。</PlainLine></Cell>
          </SheetGrid>
        </SheetMain>
        <MainV>
          <Splitter />
          <MainVFill><VBar w={17} before={420} thumb={12} /></MainVFill>
        </MainV>
      </SheetArea>

      <TabRow>
        <TabNav><Tri $dir="left" /><Tri $dir="left" /><Tri $dir="right" /><Tri $dir="right" /></TabNav>
        <SheetTab>激光钻孔</SheetTab>
        <TabGap />
        <HBar>
          <HBtn><Tri $dir="left" /></HBtn>
          <HThumb />
          <HTrack />
          <HBtn><Tri $dir="right" /></HBtn>
        </HBar>
        <TabEnd />
      </TabRow>
      <StatusRow>
        <StatusPanel $w={33} /><StatusPanel $w={112} /><StatusPanel $w={28} /><StatusPanel $w={30} />
        <StatusPanel $w={30}>数字</StatusPanel>
        <StatusPanel $w={26} /><StatusPanel $w={28} /><StatusPanel $w={50} />
      </StatusRow>
      <Taskbar>
        <StartBtn><Win />开始</StartBtn>
        <TbHandle $ml={6} $mr={3} />
        <Quick><IClock /><IPad /><Globe /></Quick>
        <TbHandle $ml={22} $mr={5} />
        {TASKS.map(([ic, t, on], i) => (
          <TaskBtn key={i} $on={on}>{ic}<span>{t}</span></TaskBtn>
        ))}
        <Tray>
          {TrayIcons.map((n, i) => <TrayItem key={i}>{n}</TrayItem>)}
          <Clock>9:28</Clock>
        </Tray>
      </Taskbar>

      <Ime>
        <Grip $h={18} />
        <ImeGlyph $w={19}>鑿</ImeGlyph>
        <ImeGlyph $w={17}>中</ImeGlyph>
        <ImeGlyph $w={16}><IMoon /></ImeGlyph>
        <ImeDark $w={18}>°,</ImeDark>
        <ImeGlyph $w={17}>大</ImeGlyph>
        <ImeGlyph $w={18}><IKey /></ImeGlyph>
        <ImeGlyph $w={18}><IPerson /></ImeGlyph>
        <ImeGlyph $w={20}><IImeDoc /></ImeGlyph>
      </Ime>

      <Dialog>
        <WinTitle>
          <Globe />
          <span>深圳程序</span><TitleGap />
          <span>深圳市必有德计算机软件技术有限公司——使用者：张明丹</span>
          <TitleSpacer />
          <DlgCap $s={15}><CapIcon k="min" /></DlgCap>
          <DlgCap $s={15}><CapIcon k="max" /></DlgCap>
          <DlgCap $s={16}><CapIcon k="x" /></DlgCap>
        </WinTitle>
        <DMenuRow>
          <DMenu $w={56} $off>市场模块</DMenu>
          <DMenu $w={87}><Check />工程模块</DMenu>
          <DMenu $w={60} $off>工艺模块</DMenu>
          <DMenu $w={60} $off>计划模块</DMenu>
          <DMenu $w={60}>生产模块</DMenu>
          <DMenu $w={60}>品质模块</DMenu>
          <DMenu $w={60} $off>物料模块</DMenu>
          <DMenu $w={60} $off>维修模块</DMenu>
          <DMenu $w={60} $off>行政模块</DMenu>
          <DMenu $w={60} $off>成本模块</DMenu>
          <DMenu $w={60}>网络模块</DMenu>
          <DMenu $w={60}>公用模块</DMenu>
        </DMenuRow>
        <HelpMenuRow><DMenu $w={60}>帮助</DMenu></HelpMenuRow>
        <Rule />
        <DToolbar>
          {TOOLS.map(([w, n], i) => <DTool key={i} $w={w}>{n}</DTool>)}
        </DToolbar>
        <Child>
          <ChildTitle><Globe />编写指示</ChildTitle>
          <ChildBody>
            <LeftPane>
              <Head>钻孔</Head>
              <FormGrid>
                <FLabel $pl={6}><M>PN</M></FLabel><FInput><M>2G0M6002A0</M></FInput><FLabel $pl={15}>版本</FLabel><FInput />
                <FLabel $pl={5}>编写</FLabel><FInput>刘超</FInput><FLabel $pl={15}>审核</FLabel><FInput>刘超</FInput>
                <FLabel $pl={5}><M>PPQE</M></FLabel><FInput /><FLabel $pl={15}>文控</FLabel><FInput />
              </FormGrid>
              <Tabs>
                <PTab $w={61} $on>钻孔要求</PTab>
                <PTab $w={57}>孔参数表</PTab>
                <PTab $w={61}>合刀参数</PTab>
                <PTab $w={71}>槽连孔参数</PTab>
              </Tabs>
              <TabPanel>
                <PanelFrame>
                  <GridArea>
                    <LGrid>
                      <GHead><M>NO</M></GHead><GHead>项目</GHead><GHead>参数</GHead>
                      {PARAMS.map(([no, a, b], i) => (
                        <React.Fragment key={no}>
                          <GCell $r><M>{no}</M></GCell>
                          <GCell><Mix t={a} /></GCell>
                          <GCell $sel={i === 0}><M>{b}</M></GCell>
                        </React.Fragment>
                      ))}
                    </LGrid>
                  </GridArea>
                  <VBar w={17} before={0} thumb={147} />
                </PanelFrame>
              </TabPanel>
              <Remarks>
                <RemarkRow $h={53}>
                  <VLabel>工艺备注</VLabel>
                  <RemarkBox><VBar w={15} btn={15} off /></RemarkBox>
                </RemarkRow>
                <RemarkRow $h={54}>
                  <VLabel>型号备注</VLabel>
                  <RemarkBox><VBar w={15} btn={15} off /></RemarkBox>
                </RemarkRow>
                <RemarkRow $h={60}>
                  <VLabel>订单备注</VLabel>
                  <RemarkBox />
                </RemarkRow>
              </Remarks>
            </LeftPane>
            <Split />
            <RightPane>
              <TopRow>
                <GridFrame>
                  <RGrid>
                    {['工艺名称', '编写', '审核', 'PPQE', 'PPC', '文控', '状态', '难度板'].map(h => <GHead key={h}><Mix t={h} /></GHead>)}
                    {PROCESS.map(([n, a, b], i) => {
                      const s = i === 5;
                      return (
                        <React.Fragment key={n}>
                          <GCell $sel={s} $navyRow={s}><Mix t={n} /></GCell>
                          <GCell $sel={s} $navyRow={s}>{a}</GCell>
                          <GCell $sel={s} $navyRow={s}>{b}</GCell>
                          <GCell $sel={s} $navyRow={s} /><GCell $sel={s} $navyRow={s} /><GCell $sel={s} $navyRow={s} />
                          <GCell $sel={s} $navyRow={s}>已审核</GCell>
                          <GCell $sel={s} $navyRow={s} />
                        </React.Fragment>
                      );
                    })}
                  </RGrid>
                  <VBar w={17} before={75} thumb={206} />
                </GridFrame>
                <ListFrame>
                  <ListHead>生产型号</ListHead>
                  <ListSel><M>4G0M6001A0</M></ListSel>
                </ListFrame>
              </TopRow>
              <ComboRow>
                <Combo><ComboBtn><Tri $dir="down" $off /></ComboBtn></Combo>
                <WhiteBox />
              </ComboRow>
              <BottomRow>
                <CheckPanel><CheckBox /><M>C</M></CheckPanel>
                <TreeBox>
                  <TreeRow><TreeMinus /><TreeDots $w={5} /><M>4G0M6001A0</M></TreeRow>
                  <TreeRow $pl={24}><TreeElbow $w={8} /><TreeSel><M>2G0M6002A0</M></TreeSel></TreeRow>
                </TreeBox>
                <BtnGrid>
                  {COMMANDS.map(([t, off], i) => <CmdBtn key={i} $off={off}><Mix t={t} /></CmdBtn>)}
                </BtnGrid>
              </BottomRow>
            </RightPane>
          </ChildBody>
        </Child>
        <DStatus>
          <DPanel $w={59} /><DPanel $w={58} /><DPanel $w={250} />
          <DPanel>
            <Ic $s={12} viewBox="0 0 12 12"><path d="M11 1L1 11M11 5l-6 6M11 9l-2 2" stroke="#808080" strokeWidth="1.2" /></Ic>
          </DPanel>
        </DStatus>
      </Dialog>
    </Page>
  );
}
